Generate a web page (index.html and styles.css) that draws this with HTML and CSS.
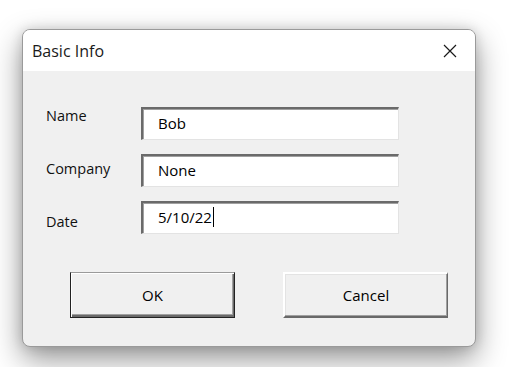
FILE: index.html
```html
<!DOCTYPE html>
<html>
<head>
<meta charset="utf-8">
<link rel="stylesheet" href="styles.css">
</head>
<body>
<div class="dialog">
  <div class="titlebar">
    <span class="title">Basic Info</span>
    <svg class="close" width="14" height="14" viewBox="0 0 14 14"><path d="M1 1 L13 13 M13 1 L1 13" stroke="#1a1a1a" stroke-width="1.2" fill="none"/></svg>
  </div>
  <div class="content">
    <div class="form">
      <div class="labels">
        <div class="label">Name</div>
        <div class="label">Company</div>
        <div class="label">Date</div>
      </div>
      <div class="fields">
        <div class="field">Bob</div>
        <div class="field">None</div>
        <div class="field">5/10/22<span class="caret"></span></div>
      </div>
    </div>
    <div class="buttons">
      <div class="btn btn-default">OK</div>
      <div class="btn">Cancel</div>
    </div>
  </div>
</div>
</body>
</html>
```
FILE: styles.css
```css
html, body {
  margin: 0;
  padding: 0;
  background: #ffffff;
  width: 512px;
  height: 367px;
  overflow: hidden;
}
body {
  font-family: "Open Sans", "Noto Sans", sans-serif;
  color: #000;
  padding: 29px 0 0 22px;
  box-sizing: border-box;
}
.dialog {
  width: 454px;
  height: 318px;
  box-sizing: border-box;
  border: 1px solid #9a9a9a;
  border-radius: 8px;
  background: #f0f0f0;
  overflow: hidden;
  box-shadow: 0 12px 30px rgba(0,0,0,0.42), 0 0 12px rgba(0,0,0,0.14);
}
.titlebar {
  height: 41px;
  background: #ffffff;
  display: flex;
  align-items: center;
  justify-content: space-between;
  padding: 0 18px 0 9px;
}
.title {
  font-size: 16px;
  color: #1a1a1a;
  line-height: 20px;
}
.close {
  display: block;
  margin-top: 1px;
}
.content {
  padding: 0 0 0 23px;
}
.form {
  display: flex;
}
.labels {
  width: 95px;
  padding-top: 35px;
  display: flex;
  flex-direction: column;
  gap: 33px;
}
.label {
  height: 20px;
  line-height: 20px;
  font-size: 14.5px;
  color: #111;
}
.fields {
  padding-top: 36px;
  display: flex;
  flex-direction: column;
  gap: 14px;
}
.field {
  width: 258px;
  height: 33px;
  box-sizing: border-box;
  background: #ffffff;
  border-style: solid;
  border-width: 2px 1px 1px 2px;
  border-color: #6a6a6a #e3e3e3 #e3e3e3 #6a6a6a;
  box-shadow: inset 1px 1px 0 #a0a0a0;
  padding: 0 0 2px 15px;
  font-size: 15px;
  display: flex;
  align-items: center;
}
.caret {
  display: inline-block;
  width: 1px;
  height: 20px;
  background: #000;
  margin-left: 1px;
}
.buttons {
  display: flex;
  gap: 48px;
  margin-top: 38px;
  padding-left: 24px;
}
.btn {
  width: 165px;
  height: 46px;
  box-sizing: border-box;
  display: flex;
  align-items: center;
  justify-content: center;
  font-size: 15px;
  background: #f0f0f0;
  border-style: solid;
  border-width: 2px 1px 2px 2px;
  border-color: #ffffff #696969 #696969 #ffffff;
  box-shadow: inset -1px -1px 0 #a0a0a0, inset 1px 1px 0 #e3e3e3;
}
.btn-default {
  border-width: 1px;
  border-color: #222 #222 #222 #222;
  border-top-color: #9a9a9a;
  box-shadow: inset 1px 1px 0 #ffffff, inset -1px -2px 0 #6a6a6a, inset -2px -3px 0 #a0a0a0;
}
```
